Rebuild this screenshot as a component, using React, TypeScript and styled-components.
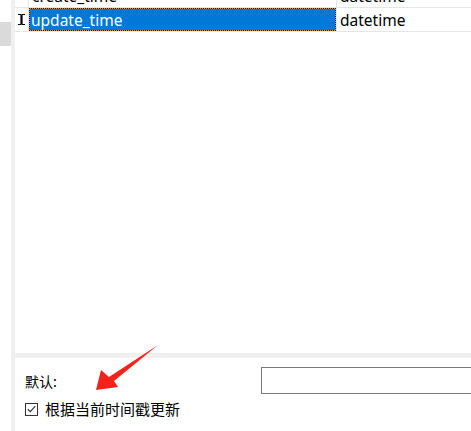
import * as React from "react";
import styled, { createGlobalStyle } from "styled-components";

const GlobalStyle = createGlobalStyle`
  html, body {
    margin: 0;
    padding: 0;
    background: #ffffff;
  }
  body {
    font-family: "Noto Sans", "Noto Sans CJK SC", sans-serif;
  }
`;

const Page = styled.div`
  position: relative;
  display: flex;
  width: 471px;
  height: 431px;
  overflow: hidden;
  background: #ffffff;
`;

const LeftRail = styled.div`
  width: 11px;
  flex: none;
  padding-top: 22px;
  background: #ffffff;
`;

const RailBlock = styled.div`
  height: 24px;
  background: #dadada;
`;

const Gutter = styled.div`
  width: 4px;
  flex: none;
  background: #f0f0f0;
`;

const Main = styled.div`
  flex: 1;
  display: flex;
  flex-direction: column;
  min-width: 0;
`;

const GridViewport = styled.div`
  height: 353px;
  flex: none;
  overflow: hidden;
`;

const GridBody = styled.div`
  margin-top: -16px;
`;

const Row = styled.div`
  display: grid;
  grid-template-columns: 14px 307px 1fr;
  height: 23px;
  border-bottom: 1px solid #e6e6e6;
`;

const RowHeader = styled.div`
  display: flex;
  align-items: center;
  justify-content: center;
  border-right: 1px solid #e6e6e6;
`;

const Cell = styled.div<{ $selected?: boolean }>`
  display: flex;
  align-items: center;
  padding-left: ${(p) => (p.$selected ? "2px" : "3px")};
  font-size: 15.5px;
  color: ${(p) => (p.$selected ? "#ffffff" : "#000000")};
  background: ${(p) => (p.$selected ? "#0078d7" : "transparent")};
  box-shadow: ${(p) => (p.$selected ? "inset 0 0 0 1px #d98b3a" : "none")};
  outline: ${(p) => (p.$selected ? "1px dotted #1a1a1a" : "none")};
  outline-offset: -1px;
  white-space: nowrap;
  overflow: hidden;
`;

const TypeCell = styled(Cell)`
  border-left: 1px solid #e6e6e6;
`;

const Splitter = styled.div`
  height: 5px;
  flex: none;
  background: #f0f0f0;
`;

const Options = styled.div`
  flex: 1;
  display: flex;
  flex-direction: column;
  padding: 9px 0 0 10px;
  font-family: "Noto Sans CJK SC", "Noto Sans", sans-serif;
  font-size: 14px;
  color: #000000;
`;

const DefaultRow = styled.div`
  display: grid;
  grid-template-columns: 236px 1fr;
  align-items: center;
  height: 27px;
`;

const Label = styled.span`
  line-height: 1;
`;

const TextInput = styled.div`
  height: 25px;
  width: 230px;
  border: 1px solid #7a7a7a;
  background: #ffffff;
`;

const CheckRow = styled.label`
  display: flex;
  align-items: center;
  gap: 7px;
  margin-top: 7px;
  font-size: 15px;
  line-height: 16px;
`;

const Box = styled.span`
  display: flex;
  align-items: center;
  justify-content: center;
  width: 11px;
  height: 11px;
  border: 1px solid #333333;
  background: #ffffff;
`;

const Arrow = styled.svg`
  position: absolute;
  left: 0;
  top: 0;
  pointer-events: none;
`;

const IBeam = () => (
  <svg width="7" height="11" viewBox="0 0 7 11">
    <path d="M0 0.5h3v10H0M7 0.5H4v10h3" fill="none" stroke="#000" strokeWidth="1" />
    <path d="M3.5 0.5v10" stroke="#000" strokeWidth="1.4" />
  </svg>
);

const columns = [
  { name: "create_time", type: "datetime" },
  { name: "update_time", type: "datetime", selected: true },
];

export default function App() {
  return (
    <Page>
      <GlobalStyle />
      <LeftRail>
        <RailBlock />
      </LeftRail>
      <Gutter />
      <Main>
        <GridViewport>
          <GridBody>
            {columns.map((c) => (
              <Row key={c.name}>
                <RowHeader>{c.selected ? <IBeam /> : null}</RowHeader>
                <Cell $selected={c.selected}>{c.name}</Cell>
                <TypeCell>{c.type}</TypeCell>
              </Row>
            ))}
          </GridBody>
        </GridViewport>
        <Splitter />
        <Options>
          <DefaultRow>
            <Label>默认:</Label>
            <TextInput />
          </DefaultRow>
          <CheckRow>
            <Box>
              <svg width="9" height="8" viewBox="0 0 9 8">
                <path d="M0.8 4.2L3.3 6.6L8.3 1.2" fill="none" stroke="#333" strokeWidth="1.2" />
              </svg>
            </Box>
            根据当前时间戳更新
          </CheckRow>
        </Options>
      </Main>
      <Arrow width="471" height="431" viewBox="0 0 471 431">
        <polygon
          points="158,345 114,381 118,387 96,390 101,370 109,377"
          fill="#f4221b"
        />
      </Arrow>
    </Page>
  );
}
